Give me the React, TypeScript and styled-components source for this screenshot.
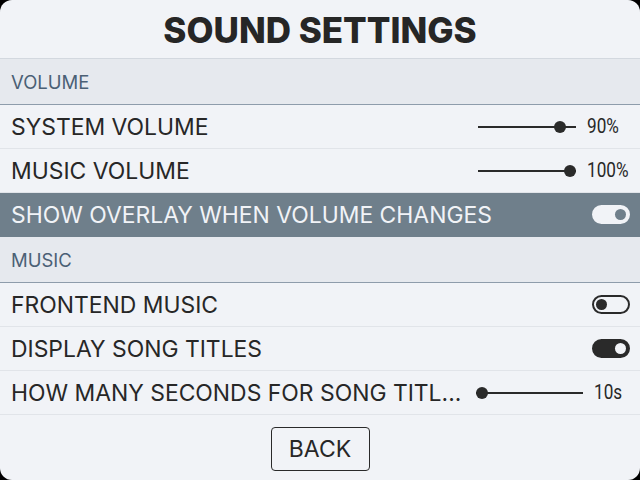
import React from "react";
import styled, { createGlobalStyle } from "styled-components";

const Global = createGlobalStyle`
  html, body { margin: 0; padding: 0; background: #000; }
  body { font-family: Inter, "Noto Sans", sans-serif; }
  * { box-sizing: border-box; }
`;

const Screen = styled.div`
  width: 640px;
  height: 480px;
  background: #f1f3f7;
  border-radius: 12px;
  overflow: hidden;
  display: flex;
  flex-direction: column;
  color: #272727;
`;

const Header = styled.header`
  height: 59px;
  flex: none;
  display: flex;
  align-items: center;
  justify-content: center;
  border-bottom: 1px solid #d3d8df;
`;

const Title = styled.h1`
  margin: 0;
  font-family: Inter, sans-serif;
  font-weight: 800;
  font-size: 35px;
  line-height: 1;
  color: #262626;
  padding-top: 3px;
`;

const List = styled.div`
  flex: 1;
  display: flex;
  flex-direction: column;
`;

const SectionHeader = styled.div`
  height: 46px;
  flex: none;
  display: flex;
  align-items: center;
  padding: 0 11px;
  background: #e6e9ee;
  border-bottom: 1px solid #8e9cab;
  color: #4b6075;
  font-size: 18.5px;
`;

const Row = styled.div<{ $active?: boolean }>`
  height: 44px;
  flex: none;
  display: flex;
  align-items: center;
  gap: 10px;
  padding: 0 10px 0 11px;
  border-bottom: 1px solid ${(p) => (p.$active ? "#6f7f8b" : "#e1e4e9")};
  background: ${(p) => (p.$active ? "#6f7f8b" : "transparent")};
  color: ${(p) => (p.$active ? "#f1f3f7" : "#272727")};
`;

const Label = styled.span`
  flex: 1;
  min-width: 0;
  font-size: 22.9px;
  white-space: nowrap;
`;

const Slider = styled.div<{ $width: number }>`
  position: relative;
  flex: none;
  width: ${(p) => p.$width}px;
  height: 12px;
  margin-right: 2px;
  &::before {
    content: "";
    position: absolute;
    left: 0;
    right: 0;
    top: 5px;
    height: 2px;
    background: #2a2a2a;
  }
`;

const Knob = styled.span`
  position: absolute;
  top: 0;
  width: 12px;
  height: 12px;
  border-radius: 50%;
  background: #2a2a2a;
`;

const Value = styled.span<{ $width: number }>`
  flex: none;
  width: ${(p) => p.$width}px;
  font-family: Roboto, "Liberation Sans", sans-serif;
  font-size: 19.5px;
  color: #272727;
  white-space: nowrap;
  transform: scaleX(0.88);
  transform-origin: left center;
  margin-left: -1px;
`;

const Toggle = styled.span<{ $on: boolean; $inverted?: boolean }>`
  position: relative;
  flex: none;
  width: 38px;
  height: 19px;
  border-radius: 10px;
  border: 2px solid ${(p) => (p.$inverted ? "#f1f3f7" : "#2a2a2a")};
  background: ${(p) =>
    p.$inverted ? "#f1f3f7" : p.$on ? "#2a2a2a" : "#f1f3f7"};
  &::after {
    content: "";
    position: absolute;
    top: 2px;
    ${(p) => (p.$on ? "right: 2px;" : "left: 2px;")}
    width: 11px;
    height: 11px;
    border-radius: 50%;
    background: ${(p) =>
      p.$inverted ? "#6f7f8b" : p.$on ? "#f1f3f7" : "#2a2a2a"};
  }
`;

const Footer = styled.footer`
  flex: none;
  height: 65px;
  display: flex;
  justify-content: center;
  padding-top: 12px;
`;

const BackButton = styled.button`
  width: 99px;
  height: 44px;
  border: 1px solid #2a2a2a;
  border-radius: 4px;
  background: transparent;
  font-family: Inter, sans-serif;
  font-size: 23px;
  color: #272727;
  padding: 0;
  cursor: pointer;
`;

type SliderRowProps = {
  label: string;
  pct: number;
  width: number;
  value: string;
  valueWidth: number;
};

const SliderRow = ({ label, pct, width, value, valueWidth }: SliderRowProps) => (
  <Row>
    <Label>{label}</Label>
    <Slider $width={width}>
      <Knob style={{ left: `${(pct / 100) * (width - 12)}px` }} />
    </Slider>
    <Value $width={valueWidth}>{value}</Value>
  </Row>
);

export default function App() {
  return (
    <>
      <Global />
      <Screen>
        <Header>
          <Title>SOUND SETTINGS</Title>
        </Header>
        <List>
          <SectionHeader>VOLUME</SectionHeader>
          <SliderRow label="SYSTEM VOLUME" pct={88} width={98} value="90%" valueWidth={43} />
          <SliderRow label="MUSIC VOLUME" pct={100} width={98} value="100%" valueWidth={43} />
          <Row $active>
            <Label>SHOW OVERLAY WHEN VOLUME CHANGES</Label>
            <Toggle $on $inverted />
          </Row>
          <SectionHeader>MUSIC</SectionHeader>
          <Row>
            <Label>FRONTEND MUSIC</Label>
            <Toggle $on={false} />
          </Row>
          <Row>
            <Label>DISPLAY SONG TITLES</Label>
            <Toggle $on />
          </Row>
          <SliderRow
            label="HOW MANY SECONDS FOR SONG TITL..."
            pct={0}
            width={107}
            value="10s"
            valueWidth={36}
          />
        </List>
        <Footer>
          <BackButton>BACK</BackButton>
        </Footer>
      </Screen>
    </>
  );
}
